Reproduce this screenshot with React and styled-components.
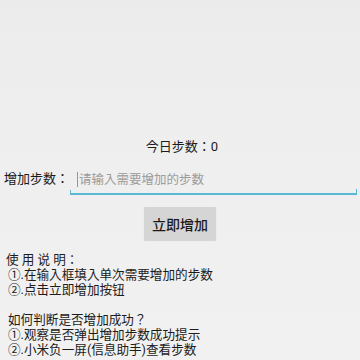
import React from "react";
import styled, { createGlobalStyle } from "styled-components";

const GlobalStyle = createGlobalStyle`
  html, body {
    margin: 0;
    padding: 0;
  }
  body {
    background: linear-gradient(180deg, #ebebeb 0px, #eeeeee 90px, #f1f1f1 360px);
    font-family: Roboto, "Noto Sans CJK JP", sans-serif;
    color: #1c1c1c;
  }
`;

const Page = styled.div`
  width: 360px;
  height: 360px;
  box-sizing: border-box;
  padding-top: 139px;
  overflow: hidden;
`;

const Today = styled.div`
  text-align: center;
  font-size: 13px;
  line-height: 16px;
  padding-left: 4px;
`;

const InputRow = styled.div`
  display: flex;
  align-items: flex-start;
  margin-top: 12px;
  padding: 0 3px 0 4px;
  height: 30px;
`;

const Label = styled.span`
  width: 66px;
  font-size: 13px;
  line-height: 24px;
  white-space: nowrap;
`;

const Field = styled.div`
  position: relative;
  flex: 1;
  height: 26px;
  border-bottom: 2px solid #5ab8d5;

  &::before,
  &::after {
    content: "";
    position: absolute;
    bottom: 0;
    width: 1px;
    background: #5ab8d5;
  }
  &::before {
    left: 0;
    height: 3px;
  }
  &::after {
    right: 0;
    height: 4px;
  }
`;

const Caret = styled.span`
  position: absolute;
  left: 7px;
  top: 5px;
  width: 1px;
  height: 15px;
  background: #8a9aa6;
`;

const Input = styled.input`
  width: 100%;
  height: 24px;
  box-sizing: border-box;
  border: none;
  outline: none;
  background: transparent;
  padding: 0 0 0 9px;
  font-family: inherit;
  font-size: 12.5px;
  color: #222;

  &::placeholder {
    color: #9c9c9c;
  }
`;

const ButtonRow = styled.div`
  display: flex;
  justify-content: center;
  margin-top: 10px;
`;

const Button = styled.button`
  width: 72px;
  height: 33px;
  border: none;
  border-radius: 1px;
  background: #d5d5d5;
  font-family: inherit;
  font-size: 14px;
  font-weight: 500;
  color: #1a1a1a;
  padding: 0;
  box-shadow: 0 1px 1px rgba(0, 0, 0, 0.12);
`;

const Notes = styled.div`
  margin-top: 12px;
  padding-left: 6px;
  font-size: 12.6px;
  line-height: 15px;
`;

const Line = styled.div`
  padding-left: ${(p) => (p.$indent ? "2px" : "0")};
  height: 15px;
  white-space: nowrap;
`;

export default function App() {
  return (
    <>
      <GlobalStyle />
      <Page>
        <Today>今日步数：0</Today>
        <InputRow>
          <Label>增加步数：</Label>
          <Field>
            <Caret />
            <Input placeholder="请输入需要增加的步数" />
          </Field>
        </InputRow>
        <ButtonRow>
          <Button>立即增加</Button>
        </ButtonRow>
        <Notes>
          <Line>使 用 说 明：</Line>
          <Line $indent>①.在输入框填入单次需要增加的步数</Line>
          <Line $indent>②.点击立即增加按钮</Line>
          <Line />
          <Line $indent>如何判断是否增加成功？</Line>
          <Line $indent>①.观察是否弹出增加步数成功提示</Line>
          <Line $indent>②.小米负一屏(信息助手)查看步数</Line>
        </Notes>
      </Page>
    </>
  );
}
